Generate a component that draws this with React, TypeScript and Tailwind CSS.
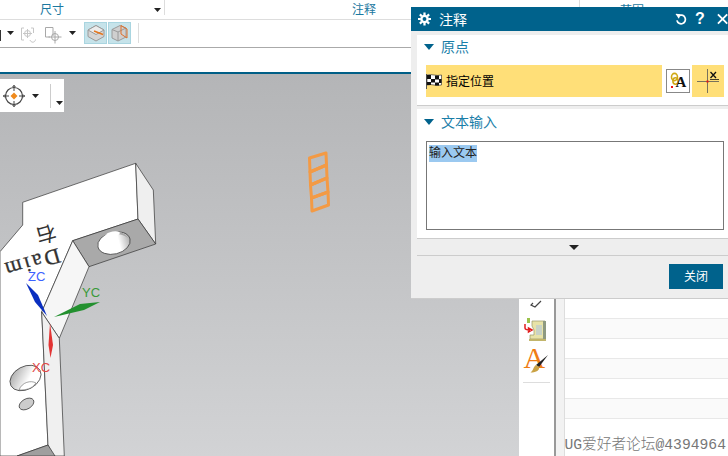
const CJK = "font-['Liberation_Sans','Noto_Sans_CJK_SC',sans-serif]";

function Caret({ className = "" }: { className?: string }) {
  return (
    <svg width="7" height="4" viewBox="0 0 7 4" className={className}>
      <path d="M0 0H7L3.5 4Z" fill="#222" />
    </svg>
  );
}

function SectionHead({ label }: { label: string }) {
  return (
    <div className="flex items-center h-6 pl-[7px]">
      <svg width="10" height="6" viewBox="0 0 10 6">
        <path d="M0 0H10L5 6Z" fill="#00628c" />
      </svg>
      <span className="ml-[7px] text-[14px] leading-none text-[#1a7ea8]">{label}</span>
    </div>
  );
}

function FadedSnap() {
  return (
    <svg width="18" height="18" viewBox="0 0 18 18" fill="none" stroke="#c6c6c6">
      <path d="M4 2H1.5V14H4M11 2H13.5V7" />
      <circle cx="7.5" cy="7.5" r="3" />
      <path d="M7.5 3V12M3 7.5H12" />
      <path d="M10 14C11 17 15 17 15.5 13.5" />
    </svg>
  );
}

function PointBox() {
  return (
    <svg width="18" height="18" viewBox="0 0 18 18" fill="none" stroke="#a8a8a8">
      <path d="M9 10V1.5H1.5V11H6" />
      <circle cx="11" cy="11" r="3.5" />
      <path d="M11 5V17.5M4.5 11H17.5" />
    </svg>
  );
}

function CubeA() {
  return (
    <svg width="18" height="18" viewBox="0 0 18 18">
      <path d="M1 6L9 1.5L17 6V12.5L9 17L1 12.5Z" fill="#d5d5d5" stroke="#9a9a9a" />
      <path d="M1 6L9 1.5L17 6L9 10.5Z" fill="#ececec" stroke="#9a9a9a" />
      <path d="M7 7L16 10.5" stroke="#e5761d" strokeWidth="1.4" />
    </svg>
  );
}

function CubeB() {
  return (
    <svg width="18" height="18" viewBox="0 0 18 18">
      <path d="M1 5.5L9 1.5L15 4V13L7 17L1 14Z" fill="#cfcfcf" stroke="#9a9a9a" />
      <path d="M1 5.5L7 8V17M7 8L15 4" fill="none" stroke="#9a9a9a" />
      <path d="M10 1.5L16 5V14L10 10Z" fill="none" stroke="#e0702a" />
    </svg>
  );
}

function Target() {
  return (
    <svg width="24" height="24" viewBox="0 0 24 24" fill="none" stroke="#444">
      <circle cx="12" cy="12" r="8.5" strokeWidth="1.2" />
      <path d="M12 1V7M12 17V23M1 12H7M17 12H23M10.5 3L12 1.5L13.5 3M10.5 21L12 22.5L13.5 21M3 10.5L1.5 12L3 13.5M21 10.5L22.5 12L21 13.5" />
      <path d="M12 8.5L15.5 12L12 15.5L8.5 12Z" fill="#f08a1d" stroke="none" />
    </svg>
  );
}

function Flag() {
  return (
    <svg width="16" height="17" viewBox="0 0 16 17">
      <path d="M0.5 1V16" stroke="#555" />
      <path d="M1 2C6 0.5 10 3.5 15.5 2V12C10 13.5 6 10.5 1 12Z" fill="#fff" stroke="#222" strokeWidth="0.6" />
      <path d="M1 2H5V6H1ZM9 2.5H13V6.5H9ZM5 6H9V9.5H5ZM13 6H15.5V10H13ZM1 9H5V12H1ZM9 9.5H13V12.5H9Z" fill="#111" />
    </svg>
  );
}

function FontPointIcon() {
  return (
    <svg width="18" height="18" viewBox="0 0 18 18">
      <ellipse cx="5.5" cy="5" rx="3" ry="3.6" fill="none" stroke="#d0a915" strokeWidth="1.6" />
      <ellipse cx="6.5" cy="9" rx="2.6" ry="3.2" fill="none" stroke="#d0a915" strokeWidth="1.6" />
      <text x="6.5" y="15" fontFamily="Liberation Serif" fontWeight="700" fontSize="15" fill="#111">
        A
      </text>
      <rect x="2" y="14" width="2" height="2" fill="#e11" />
    </svg>
  );
}

function OriginIcon() {
  return (
    <svg width="24" height="24" viewBox="0 0 24 24">
      <path d="M1 12.5H23M11.5 0V24" stroke="#555" strokeWidth="0.8" />
      <rect x="10.5" y="11.5" width="2" height="2" fill="#e11" />
      <path d="M14.5 3L20 9M20 3L14.5 9" stroke="#111" strokeWidth="1.3" />
      <path d="M14 10.5H23" stroke="#111" strokeWidth="0.8" />
    </svg>
  );
}

function Gear() {
  return (
    <svg width="14" height="14" viewBox="0 0 14 14">
      <path
        d="M7 2.4A4.6 4.6 0 1 0 7 11.6A4.6 4.6 0 1 0 7 2.4ZM7 4.9A2.1 2.1 0 1 1 7 9.1A2.1 2.1 0 1 1 7 4.9Z"
        fill="#fff"
        fillRule="evenodd"
      />
      <path
        d="M5.8 0H8.2V3H5.8ZM5.8 11H8.2V14H5.8ZM0 5.8H3V8.2H0ZM11 5.8H14V8.2H11ZM1.2 2.9L2.9 1.2L4.9 3.2L3.2 4.9ZM9.1 10.8L10.8 9.1L12.8 11.1L11.1 12.8ZM1.2 11.1L3.2 9.1L4.9 10.8L2.9 12.8ZM9.1 3.2L11.1 1.2L12.8 2.9L10.8 4.9Z"
        fill="#fff"
      />
    </svg>
  );
}

function Machine() {
  return (
    <svg width="24" height="24" viewBox="0 0 24 24">
      <path d="M8 3H21V21H6V17H10V12L8 8Z" fill="#e8e3a8" stroke="#9a9668" strokeWidth="0.7" />
      <path d="M19 3H22V21H19Z" fill="#8e9a82" />
      <path d="M5 21H22V23H5Z" fill="#c2b56b" />
      <path d="M12 7H18V17H12Z" fill="#c8d2c6" />
      <rect x="3" y="0" width="3" height="5" fill="#9bc24a" />
      <path d="M1 6V10C1 12 3 12 6 12M8 12L4.5 10V14Z" fill="none" stroke="#e11d1d" strokeWidth="1.5" />
    </svg>
  );
}

function BrushA() {
  return (
    <svg width="30" height="34" viewBox="0 0 30 34">
      <text x="2.5" y="28" fontFamily="Liberation Serif" fontSize="30" fill="#ef7d14">
        A
      </text>
      <path d="M27 15L15 25L18 27Z" fill="#222" />
      <path d="M15 25C12 27 13 30 9.5 32.5C14 32.5 19 31 18 27Z" fill="#caa244" />
    </svg>
  );
}

function Model() {
  return (
    <svg className="absolute inset-0" width="519" height="382" viewBox="0 74 519 382">
      <defs>
        <linearGradient id="hole" x1="0" x2="1">
          <stop offset="0.65" stopColor="#fff" />
          <stop offset="1" stopColor="#b0b0b0" />
        </linearGradient>
        <linearGradient id="hole2" x1="0" x2="1" y1="0" y2="1">
          <stop offset="0" stopColor="#999" />
          <stop offset="0.6" stopColor="#fff" />
        </linearGradient>
      </defs>
      <g stroke="#333" strokeWidth="0.7" strokeLinejoin="round">
        <path d="M22.7 202.3L135.7 163.3L138 219L72.7 240.7L41.7 312L48 445L17 456H0V251.7L22.7 225Z" fill="#fff" />
        <path d="M135.7 163.3L153.3 190L155.7 244L138 219Z" fill="#efefef" />
        <path d="M72.7 240.7L138 219L155.7 244L89 266.7Z" fill="#a9a9a9" />
        <path d="M72.7 240.7L89 266.7L59.3 338.3L41.7 312Z" fill="#f6f6f6" />
        <path d="M41.7 312L59.3 338.3L64.3 456H53L48 445Z" fill="#f0f0f0" />
        <path d="M48 445L55 456H17Z" fill="#9f9f9f" />
      </g>
      <ellipse cx="114" cy="243" rx="16.5" ry="11" transform="rotate(-14 114 243)" fill="url(#hole)" stroke="#333" strokeWidth="0.7" />
      <path d="M100 237C106 228 124 230 128 238C120 232 108 233 100 237Z" fill="#a8a8a8" />
      <ellipse cx="113" cy="234" rx="7" ry="2.5" transform="rotate(-10 113 234)" fill="#fff" />
      <ellipse cx="25.5" cy="378" rx="16.5" ry="11.5" transform="rotate(-28 25.5 378)" fill="url(#hole2)" stroke="#333" strokeWidth="0.7" />
      <path d="M19 390C22 382 31 380 36 383C32 389 26 390 19 390Z" fill="#fff" stroke="#666" strokeWidth="0.6" />
      <ellipse cx="26.5" cy="404" rx="8" ry="5" transform="rotate(-30 26.5 404)" fill="#ccc" stroke="#333" strokeWidth="0.7" />
      <text transform="translate(58 248) rotate(164)" fontFamily="Liberation Serif" fontSize="22" letterSpacing="2.5" stroke="#333" strokeWidth="0.3" fill="#333">
        Daim
      </text>
      <text transform="translate(46 234) rotate(164)" textAnchor="middle" y="7" fontFamily="Noto Sans CJK SC" fontSize="20" fill="#333">
        右
      </text>
      <path d="M26 283L38 295L47 316L35 302Z" fill="#0a2fc0" />
      <path d="M54 317L80 304L100 302L84 310Z" fill="#23902f" />
      <path d="M50 323L53 345L50.5 358L48.5 345Z" fill="#e23434" />
      <g fontFamily="Liberation Sans" fontSize="13">
        <text x="28" y="281" fill="#3d62ff">ZC</text>
        <text x="82" y="297" fill="#3a9a3a">YC</text>
        <text x="32" y="372" fill="#e24848">XC</text>
      </g>
      <g fill="none" stroke="#f39a45" strokeWidth="3" strokeLinejoin="round">
        <path d="M309.5 158L326 153L326.5 165L310 172Z" />
        <path d="M310 172L326.5 165L327 178L310.5 185Z" />
        <path d="M310.5 185L327 178L328 192L311.5 198Z" />
        <path d="M311.5 198L328 192L328.5 205L312 211Z" />
      </g>
    </svg>
  );
}

export default function App() {
  return (
    <div className={`relative w-[728px] h-[456px] overflow-hidden bg-white flex flex-col ${CJK}`}>
      <div className="h-5 shrink-0 flex border-b border-[#dddddd] text-[12px] text-[#1b78a0]">
        <div className="w-[165px] h-[15px] flex items-start border-r border-[#dddddd]">
          <span className="ml-10 mt-[4px] leading-none">尺寸</span>
          <Caret className="ml-[90px] mt-2" />
        </div>
        <div className="w-[415px] h-[15px] border-r border-[#dddddd] pl-[187px] pt-[4px] leading-none">注释</div>
        <div className="w-[120px] pl-10 pt-[5px] leading-none">范围</div>
      </div>

      <div className="h-7 shrink-0 flex items-center border-b border-[#aaaaaa] pb-px">
        <div className="w-px h-[11px] bg-[#333] mt-1" />
        <Caret className="ml-[6px]" />
        <div className="ml-[6px] mt-1">
          <FadedSnap />
        </div>
        <div className="ml-[6px] mt-1">
          <PointBox />
        </div>
        <Caret className="ml-[7px]" />
        <div className="ml-[8px] w-[23px] h-[22px] flex items-center justify-center bg-[#c6e3ea] border border-[#a9d5e0]">
          <CubeA />
        </div>
        <div className="ml-[1px] w-[23px] h-[22px] flex items-center justify-center bg-[#c6e3ea] border border-[#a9d5e0]">
          <CubeB />
        </div>
        <div className="ml-[7px] w-px h-5 bg-[#dddddd]" />
      </div>

      <div className="h-[26px] shrink-0 border-b-2 border-[#005f87]" />

      <div className="flex-1 flex min-h-0">
        <div className="relative w-[519px] bg-gradient-to-b from-[#b4b5b7] to-[#d2d3d5] overflow-hidden">
          <Model />
          <div className="absolute left-0 top-[5px] w-16 h-[33px] bg-white flex items-center">
            <div className="ml-[2px]">
              <Target />
            </div>
            <Caret className="ml-[6px]" />
            <div className="ml-[11px] w-px h-6 bg-[#cccccc]" />
            <Caret className="ml-[5px] mt-[14px]" />
          </div>
        </div>

        <div className="w-[37px] shrink-0 bg-white border-r-2 border-[#999999] flex flex-col items-center pr-px">
          <div className="h-[244px] w-full shrink-0 flex items-start justify-center pt-[226px]">
            <svg width="12" height="10" viewBox="0 0 12 10" fill="none" stroke="#444" strokeWidth="1.2">
              <path d="M11 1L5 7L1 5L3 3" />
            </svg>
          </div>
          <Machine />
          <div className="-mt-[2px]">
            <BrushA />
          </div>
          <div className="mt-2 w-[27px] h-px bg-[#dddddd]" />
        </div>
        <div className="w-[9px] shrink-0 bg-[#f2f2f2] border-r border-[#dddddd]" />
        <div className="flex-1 flex flex-col pt-[244px]">
          {[0, 1, 2, 3, 4, 5].map((i) => (
            <div key={i} className={`h-5 shrink-0 border-t border-[#e8e8e8] ${i % 2 === 0 ? "bg-[#fafafa]" : "bg-white"}`} />
          ))}
        </div>
      </div>

      {/* dialog */}
      <div className="absolute left-[411px] top-[7px] w-[317px] h-[292px] bg-[#eeeeee] border-b border-[#cccccc] flex flex-col">
        <div className="h-6 shrink-0 bg-[#00628c] flex items-center text-white pl-[7px]">
          <Gear />
          <span className="ml-2 mt-px text-[14px] leading-none whitespace-nowrap">注释</span>
          <svg className="ml-[208px]" width="13" height="13" viewBox="0 0 14 14" fill="none" stroke="#fff" strokeWidth="2">
            <path d="M4 3A5 5 0 1 1 2.2 8" />
            <path d="M1 1L5.5 1.5L4 5.5" strokeWidth="1.4" fill="#fff" />
          </svg>
          <span className="ml-[8px] text-[16px] font-bold leading-none">?</span>
          <svg className="ml-[12px]" width="12" height="12" viewBox="0 0 12 12" stroke="#fff" strokeWidth="2">
            <path d="M1 1L11 11M11 1L1 11" />
          </svg>
        </div>

        <div className="ml-[6px] mt-1 h-[70px] shrink-0 bg-white flex flex-col">
          <SectionHead label="原点" />
          <div className="mt-[6px] flex items-center pl-[9px]">
            <div className="w-[236px] h-8 bg-[#ffdf78] flex items-center">
              <Flag />
              <span className="ml-[4px] mt-px text-[12px] leading-none text-black">指定位置</span>
            </div>
            <div className="ml-1 w-6 h-6 flex items-center justify-center bg-white border border-[#888888]">
              <FontPointIcon />
            </div>
            <div className="ml-[2px] w-8 h-8 bg-[#ffdf78] flex items-center justify-center">
              <OriginIcon />
            </div>
          </div>
        </div>
        <div className="h-px bg-[#cccccc] ml-[6px] shrink-0" />

        <div className="ml-[6px] mt-[3px] h-[129px] shrink-0 bg-white flex flex-col pt-px">
          <SectionHead label="文本输入" />
          <div className="ml-[9px] mt-[7px] w-[298px] h-[89px] border border-[#777777] p-[2px] text-[12px] text-[#222]">
            <span className="inline-block h-[17px] leading-[16px] bg-[#9bc9f0]">输入文本</span>
          </div>
        </div>
        <div className="ml-[6px] h-[18px] shrink-0 border-y border-[#cccccc] flex items-center justify-center pl-[2px]">
          <svg width="10" height="5" viewBox="0 0 10 5">
            <path d="M0 0H10L5 5Z" fill="#222" />
          </svg>
        </div>
        <div className="flex-1 flex justify-end items-start pt-[8px] pr-[5px]">
          <div className="w-[54px] h-[25px] bg-[#00628c] text-white text-[12px] flex items-center justify-center">关闭</div>
        </div>
      </div>

      <div className="absolute right-[2px] bottom-[3px] text-[14.7px] leading-none font-light text-[#777] font-['Liberation_Mono','Noto_Sans_CJK_SC',monospace] whitespace-nowrap">
        UG爱好者论坛@4394964
      </div>
    </div>
  );
}
